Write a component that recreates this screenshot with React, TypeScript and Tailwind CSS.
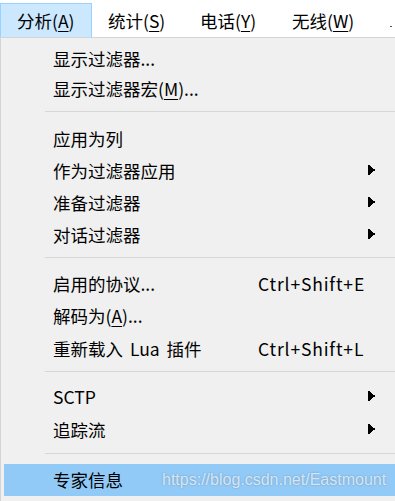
import React from 'react';

type Item = {
  label: React.ReactNode;
  shortcut?: string;
  sub?: boolean;
  h: string;
};

const Key = ({ k }: { k: string }) => <span className="underline underline-offset-[3px] decoration-1">{k}</span>;

const Arrow = () => (
  <svg width="7" height="10" viewBox="0 0 7 10" className="mr-[20px] -mt-[3px]">
    <path d="M0 0h2v1h1v1h1v1h1v1h2v2h-2v1h-1v1h-1v1h-1v1h-2z" fill="#000" />
  </svg>
);

const Row = ({ item }: { item: Item }) => (
  <div className={`flex items-center pl-[52px] ${item.h}`}>
    <span className="flex-1 [word-spacing:3px]">{item.label}</span>
    {item.shortcut && <span className="w-[137px] tracking-[0.85px]">{item.shortcut}</span>}
    {item.sub && <Arrow />}
  </div>
);

const Sep = ({ mt, mb }: { mt: string; mb: string }) => (
  <div className={`ml-[44px] h-px bg-[#d7d7d7] ${mt} ${mb}`} />
);

export default function App() {
  const menus = [
    { name: '分析', k: 'A' },
    { name: '统计', k: 'S' },
    { name: '电话', k: 'Y' },
    { name: '无线', k: 'W' },
  ];

  return (
    <div
      className="w-[395px] h-[501px] overflow-hidden bg-white text-black text-[17.5px]"
      style={{ fontFamily: '"Noto Sans CJK SC", "Noto Sans", sans-serif' }}
    >
      {/* menu bar */}
      <div className="h-[37px] flex items-end relative">
        {menus.map((m, i) => (
          <div
            key={m.name}
            className={`w-[92px] h-[34px] pl-[16px] flex items-center pt-[2px] ${
              i === 0 ? 'bg-[#cce8ff] border border-[#99d1ff] border-b-0 pl-[15px]' : ''
            }`}
          >
            {m.name}(<Key k={m.k} />)
          </div>
        ))}
        <div className="absolute left-[390px] top-[26px] w-[2px] h-[1px] bg-[#555]" />
      </div>

      {/* dropdown */}
      <div className="h-[464px] bg-[#f0f0f0] border-l border-t border-[#d4d4d4] pt-[6px]">
        <Row item={{ label: '显示过滤器...', h: 'h-[30px]' }} />
        <Row item={{ label: <>显示过滤器宏(<Key k="M" />)...</>, h: 'h-[30px]' }} />
        <Sep mt="mt-[7px]" mb="mb-[11px]" />
        <Row item={{ label: '应用为列', h: 'h-[32px]' }} />
        <Row item={{ label: '作为过滤器应用', sub: true, h: 'h-[32px]' }} />
        <Row item={{ label: '准备过滤器', sub: true, h: 'h-[32px]' }} />
        <Row item={{ label: '对话过滤器', sub: true, h: 'h-[32px]' }} />
        <Sep mt="mt-[6px]" mb="mb-[10px]" />
        <Row item={{ label: '启用的协议...', shortcut: 'Ctrl+Shift+E', h: 'h-[32px]' }} />
        <Row item={{ label: <>解码为(<Key k="A" />)...</>, h: 'h-[33px]' }} />
        <Row item={{ label: '重新载入 Lua 插件', shortcut: 'Ctrl+Shift+L', h: 'h-[32px]' }} />
        <Sep mt="mt-[6px]" mb="mb-[9px]" />
        <Row item={{ label: 'SCTP', sub: true, h: 'h-[33px]' }} />
        <Row item={{ label: '追踪流', sub: true, h: 'h-[33px]' }} />
        <Sep mt="mt-[6px]" mb="mb-[10px]" />
        <div className="ml-[3px] h-[32px] bg-[#91c9f7] flex items-center pl-[49px]">
          <span>专家信息</span>
          <span
            className="ml-[39px] text-[16px] text-white/70 [text-shadow:0_0_2px_rgba(0,0,0,0.25)]"
            style={{ fontFamily: '"Liberation Sans", Arial, sans-serif' }}
          >
            https://blog.csdn.net/Eastmount
          </span>
        </div>
      </div>
    </div>
  );
}
